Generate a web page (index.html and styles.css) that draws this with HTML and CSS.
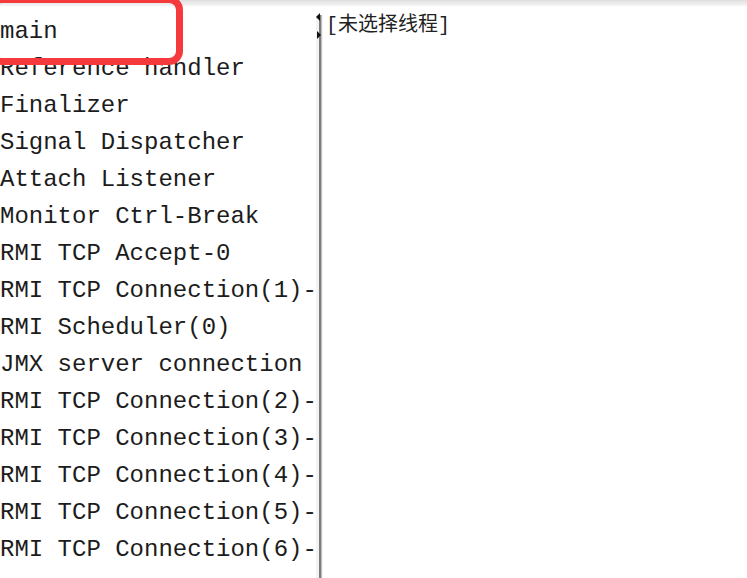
FILE: index.html
```html
<!DOCTYPE html>
<html lang="zh-CN">
<head>
    <meta charset="UTF-8">
    <title>线程</title>
    <link rel="stylesheet" href="styles.css">
</head>
<body>
    <div class="top-bar"></div>

    <div class="panes">
        <ul class="thread-list">
            <li>main</li>
            <li>Reference handler</li>
            <li>Finalizer</li>
            <li>Signal Dispatcher</li>
            <li>Attach Listener</li>
            <li>Monitor Ctrl-Break</li>
            <li>RMI TCP Accept-0</li>
            <li>RMI TCP Connection(1)-</li>
            <li>RMI Scheduler(0)</li>
            <li>JMX server connection</li>
            <li>RMI TCP Connection(2)-</li>
            <li>RMI TCP Connection(3)-</li>
            <li>RMI TCP Connection(4)-</li>
            <li>RMI TCP Connection(5)-</li>
            <li>RMI TCP Connection(6)-</li>
        </ul>

        <div class="splitter">
            <svg class="split-arrows" width="6" height="26" viewBox="0 0 6 26">
                <polygon points="0,4 4,0 4,8" fill="#111"/>
                <polygon points="1,18 5,22 1,26" fill="#111"/>
            </svg>
        </div>

        <div class="detail">
            <p class="empty">[未选择线程]</p>
        </div>
    </div>

    <!-- highlight box around "main" -->
    <div class="mark"></div>
</body>
</html>
```

FILE: styles.css
```css
* {
    margin: 0;
    padding: 0;
    box-sizing: border-box;
}

body {
    background: #fff;
    height: 578px;
    overflow: hidden;
    position: relative;
}

.top-bar {
    height: 6px;
    background: linear-gradient(#dedede, #f6f6f6);
}

.panes {
    display: flex;
    height: 572px;
}

.thread-list {
    list-style: none;
    width: 316px;
    padding-top: 7px;
    font-family: "Liberation Mono", "DejaVu Sans Mono", monospace;
    font-size: 24px;
    line-height: 37px;
    color: #1c1c1c;
    white-space: nowrap;
    overflow: hidden;
}

.splitter {
    position: relative;
    width: 7px;
    margin-top: 9px;
    background: linear-gradient(to right, #f3f3f3 0, #f3f3f3 3px, #9a9a9a 3px, #5e5e5e 4px, #9a9a9a 5px, #e6e6e6 6px, #fff 7px);
}

.split-arrows {
    position: absolute;
    left: 0;
    top: -2px;
}

.detail {
    flex: 1;
    padding: 8px 0 0 3px;
}

.empty {
    font-family: "Liberation Mono", "Noto Sans CJK SC", monospace;
    font-size: 20px;
    line-height: 24px;
    color: #222;
}

.mark {
    position: absolute;
    left: -12px;
    top: -4px;
    width: 195px;
    height: 69px;
    border: 7px solid #f53a3d;
    border-radius: 14px;
}
```
